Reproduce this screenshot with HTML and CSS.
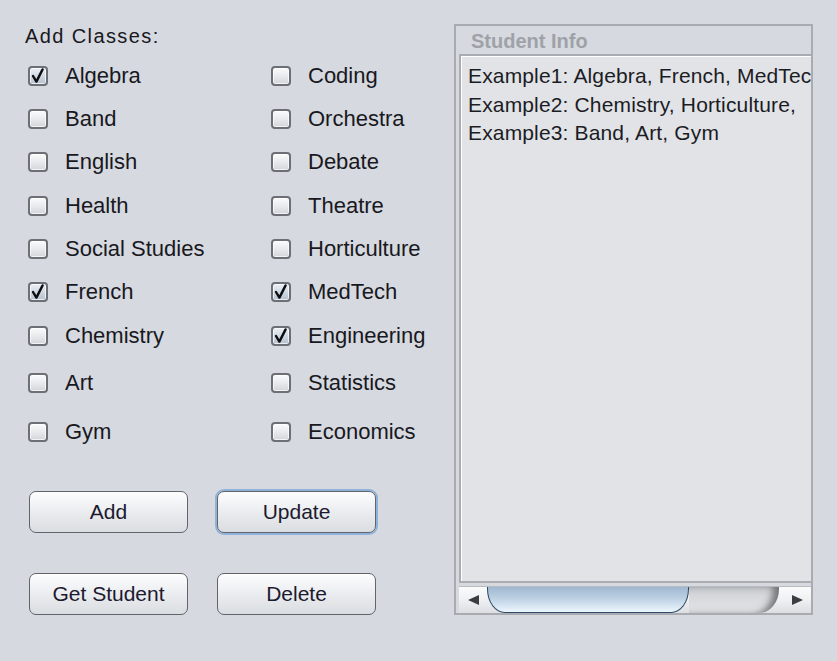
FILE: index.html
```html
<!DOCTYPE html>
<html>
<head>
<meta charset="utf-8">
<link rel="stylesheet" href="styles.css">
</head>
<body>
<div class="app">
  <div class="left">
    <p class="heading">Add Classes:</p>
    <div class="classes">
      <label class="item"><span class="box checked"><svg viewBox="0 0 20 20"><path d="M5 10 L8.4 15.6 L14.6 3.4"/></svg></span>Algebra</label>
      <label class="item"><span class="box"></span>Coding</label>
      <label class="item"><span class="box"></span>Band</label>
      <label class="item"><span class="box"></span>Orchestra</label>
      <label class="item"><span class="box"></span>English</label>
      <label class="item"><span class="box"></span>Debate</label>
      <label class="item"><span class="box"></span>Health</label>
      <label class="item"><span class="box"></span>Theatre</label>
      <label class="item"><span class="box"></span>Social Studies</label>
      <label class="item"><span class="box"></span>Horticulture</label>
      <label class="item"><span class="box checked"><svg viewBox="0 0 20 20"><path d="M5 10 L8.4 15.6 L14.6 3.4"/></svg></span>French</label>
      <label class="item"><span class="box checked"><svg viewBox="0 0 20 20"><path d="M5 10 L8.4 15.6 L14.6 3.4"/></svg></span>MedTech</label>
      <label class="item"><span class="box"></span>Chemistry</label>
      <label class="item"><span class="box checked"><svg viewBox="0 0 20 20"><path d="M5 10 L8.4 15.6 L14.6 3.4"/></svg></span>Engineering</label>
      <label class="item"><span class="box"></span>Art</label>
      <label class="item"><span class="box"></span>Statistics</label>
      <label class="item"><span class="box"></span>Gym</label>
      <label class="item"><span class="box"></span>Economics</label>
    </div>
    <div class="buttons">
      <button class="btn">Add</button>
      <button class="btn focused">Update</button>
      <button class="btn">Get Student</button>
      <button class="btn">Delete</button>
    </div>
  </div>
  <div class="panel">
    <div class="panel-title">Student Info</div>
    <div class="scrollpane">
      <div class="viewport">
        <div class="line">Example1: Algebra, French, MedTech</div>
        <div class="line">Example2: Chemistry, Horticulture,</div>
        <div class="line">Example3: Band, Art, Gym</div>
      </div>
      <div class="hscroll">
        <div class="arrow"><span class="tri-left"></span></div>
        <div class="track">
          <div class="thumb"></div>
          <div class="track-rest"></div>
        </div>
        <div class="arrow"><span class="tri-right"></span></div>
      </div>
    </div>
  </div>
</div>
</body>
</html>
```

FILE: styles.css
```css
html, body {
  margin: 0;
  padding: 0;
  background: #d6d9df;
}
body {
  width: 837px;
  height: 661px;
  overflow: hidden;
  font-family: "Liberation Sans", Arial, sans-serif;
  color: #18181e;
}
.app {
  display: flex;
  padding-top: 24px;
}
.left {
  width: 454px;
  box-sizing: border-box;
  padding-left: 25px;
}
.heading {
  margin: 0;
  font-size: 20px;
  letter-spacing: 1.4px;
  line-height: 24px;
  height: 24px;
}
.classes {
  margin-top: 13px;
  margin-left: 3px;
  display: grid;
  grid-template-columns: 243px auto;
  grid-template-rows: 43px 43px 44px 43px 43px 44px 47px 49px 30px;
}
.item {
  display: flex;
  align-items: center;
  gap: 17px;
  height: 30px;
  font-size: 22px;
  white-space: nowrap;
}
.box {
  box-sizing: border-box;
  width: 20px;
  height: 20px;
  flex: none;
  border: 2px solid #6c6f75;
  border-radius: 4px;
  background: linear-gradient(#fbfbfc, #e6e8eb 55%, #d2d5da);
  box-shadow: inset 0 0 0 1px rgba(255,255,255,0.7);
  position: relative;
}
.box.checked {
  background: linear-gradient(#edf1f6, #cdd7e2 55%, #b4c1cf);
}
.box svg {
  position: absolute;
  left: -2px;
  top: -2px;
  width: 20px;
  height: 20px;
}
.box path {
  fill: none;
  stroke: #0d0d0f;
  stroke-width: 2.4;
  stroke-linecap: round;
  stroke-linejoin: round;
}
.buttons {
  margin-top: 44px;
  margin-left: 4px;
  display: grid;
  grid-template-columns: 159px 159px;
  column-gap: 29px;
  row-gap: 40px;
}
.btn {
  box-sizing: border-box;
  width: 159px;
  height: 42px;
  border: 1.5px solid #616469;
  border-radius: 7px;
  background: linear-gradient(#fdfdfe, #eceef1 45%, #dadde1);
  font-family: "Liberation Sans", Arial, sans-serif;
  font-size: 21px;
  color: #1c1a2e;
  padding: 0;
}
.btn.focused {
  box-shadow: 0 0 0 2px #8fb2da;
}
.panel {
  box-sizing: border-box;
  width: 359px;
  height: 591px;
  border: 2px solid #a8abb0;
  padding: 0 0 0 3px;
  display: flex;
  flex-direction: column;
}
.panel-title {
  height: 28px;
  line-height: 30px;
  padding-left: 12px;
  font-weight: bold;
  font-size: 20px;
  color: #9ea2a8;
}
.scrollpane {
  flex: 1;
  display: flex;
  flex-direction: column;
}
.viewport {
  flex: 1;
  border: 2px solid #a9acb1;
  border-right: none;
  box-shadow: inset 1px 1px 0 #ffffff;
  background: #e1e3e7;
  padding: 6px 0 0 7px;
  overflow: hidden;
  white-space: nowrap;
  font-size: 21px;
  letter-spacing: 0.15px;
  line-height: 28.5px;
  color: #1c1c24;
}
.hscroll {
  height: 26px;
  margin-top: 3px;
  border-top: 1px solid #b8bbc0;
  display: flex;
  background: linear-gradient(#fbfbfc, #eef0f2 50%, #dcdee2);
}
.arrow {
  width: 28px;
  flex: none;
  display: flex;
  align-items: center;
  justify-content: center;
}
.tri-left {
  width: 0;
  height: 0;
  border-top: 5px solid transparent;
  border-bottom: 5px solid transparent;
  border-right: 11px solid #3c3d40;
}
.tri-right {
  width: 0;
  height: 0;
  border-top: 5px solid transparent;
  border-bottom: 5px solid transparent;
  border-left: 11px solid #3c3d40;
}
.track {
  flex: 1;
  display: flex;
}
.thumb {
  box-sizing: border-box;
  width: 202px;
  height: 26px;
  border: 1.5px solid #2f4a66;
  border-top: none;
  border-radius: 0 0 18px 18px / 0 0 24px 24px;
  background: linear-gradient(#9fb8d0, #bcd0e3 45%, #d6e5f2 75%, #eef6fc);
}
.track-rest {
  flex: 1;
  margin-right: 4px;
  border-radius: 0 0 20px 0 / 0 0 24px 0;
  background: linear-gradient(#c7cace, #d7d9dd 40%, #e1e3e6);
  box-shadow: inset -8px 0 7px -2px rgba(40,42,46,0.55);
}
```
